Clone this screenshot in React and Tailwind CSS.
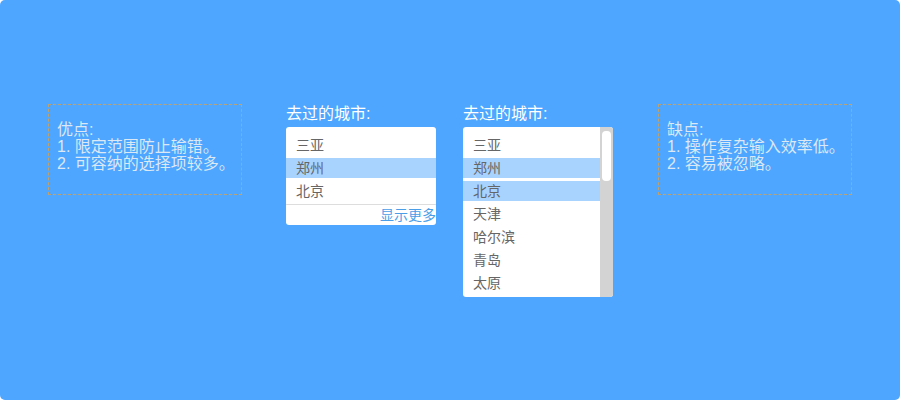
const font = { fontFamily: '"Liberation Sans", "Noto Sans CJK SC", sans-serif' };

const Note = ({ title, lines }) => (
  <div className="w-[194px] h-[91px] border border-dashed border-[#c2a26a] pl-[8px] pt-[16px] text-[16px] leading-[17px] text-[#dce8f6] whitespace-nowrap">
    <div>{title}</div>
    {lines.map((l) => (
      <div key={l}>{l}</div>
    ))}
  </div>
);

const Row = ({ children, active }) => (
  <div className={`h-[20px] mb-[3px] leading-[20px] pl-[10px] text-[14px] text-[#666] ${active ? 'bg-[#a8d3ff]' : ''}`}>
    {children}
  </div>
);

const Label = () => (
  <div className="text-white text-[16px] leading-[20px] mb-[3px]">去过的城市:</div>
);

export default function App() {
  const cities = ['三亚', '郑州', '北京', '天津', '哈尔滨', '青岛', '太原'];
  return (
    <div className="w-[900px] h-[400px] bg-white" style={font}>
      <div className="w-full h-full bg-[#4ea6fe] rounded-[5px] flex items-start pt-[104px] pl-[48px]">
        <Note title="优点:" lines={['1. 限定范围防止输错。', '2. 可容纳的选择项较多。']} />

        <div className="ml-[44px] w-[150px]">
          <Label />
          <div className="bg-white rounded-[3px] overflow-hidden pt-[8px]">
            <Row>三亚</Row>
            <Row active>郑州</Row>
            <Row>北京</Row>
            <div className="border-t border-[#ddd] h-[21px] text-right text-[14px] leading-[20px] text-[#4a9ee8]">显示更多</div>
          </div>
        </div>

        <div className="ml-[27px] w-[150px]">
          <Label />
          <div className="bg-white rounded-[3px] overflow-hidden flex h-[170px]">
            <div className="flex-1 pt-[8px]">
              {cities.map((c, i) => (
                <Row key={c} active={i === 1 || i === 2}>{c}</Row>
              ))}
            </div>
            <div className="w-[13px] bg-[#d3d3d3] pt-[4px] flex justify-center">
              <div className="w-[9px] h-[50px] bg-white rounded-[4px]" />
            </div>
          </div>
        </div>

        <div className="ml-[45px]">
          <Note title="缺点:" lines={['1. 操作复杂输入效率低。', '2. 容易被忽略。']} />
        </div>
      </div>
    </div>
  );
}
